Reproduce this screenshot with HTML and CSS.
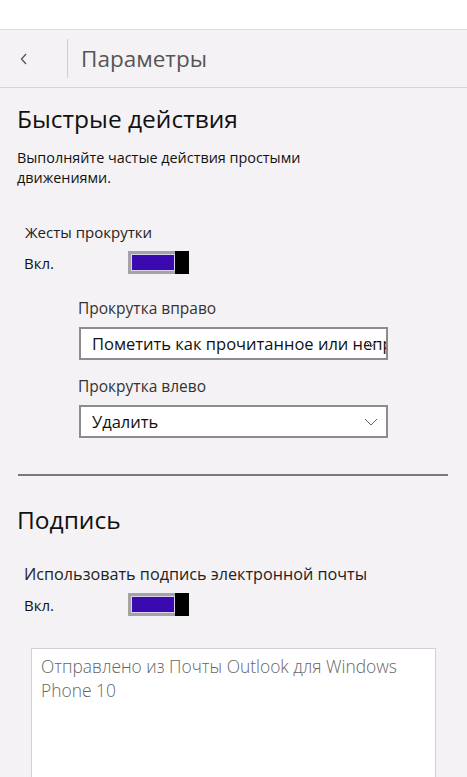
FILE: index.html
```html
<!DOCTYPE html>
<html lang="ru">
<head>
<meta charset="utf-8">
<title>Параметры</title>
<link rel="stylesheet" href="styles.css">
</head>
<body>
<div class="status"></div>
<header class="header">
  <div class="back">
    <svg width="10" height="14" viewBox="0 0 10 14"><path d="M7 2 L2.5 7 L7 12" fill="none" stroke="#555" stroke-width="1.3"/></svg>
  </div>
  <div class="title">Параметры</div>
</header>
<main class="content">
  <section class="section">
    <h2 class="heading">Быстрые действия</h2>
    <p class="desc">Выполняйте частые действия простыми движениями.</p>
    <div class="label">Жесты прокрутки</div>
    <div class="toggle-row">
      <span class="state">Вкл.</span>
      <span class="toggle"><span class="track"></span><span class="thumb"></span></span>
    </div>
    <div class="sub">
      <div class="field-label">Прокрутка вправо</div>
      <div class="select"><span class="value">Пометить как прочитанное или непрочитанное</span><svg class="chev" width="14" height="8" viewBox="0 0 14 8"><path d="M1 1 L7 7 L13 1" fill="none" stroke="#666" stroke-width="1"/></svg></div>
      <div class="field-label second">Прокрутка влево</div>
      <div class="select"><span class="value">Удалить</span><svg class="chev" width="14" height="8" viewBox="0 0 14 8"><path d="M1 1 L7 7 L13 1" fill="none" stroke="#666" stroke-width="1"/></svg></div>
    </div>
  </section>
  <hr class="rule">
  <section class="section">
    <h2 class="heading sig">Подпись</h2>
    <div class="label wide">Использовать подпись электронной почты</div>
    <div class="toggle-row">
      <span class="state">Вкл.</span>
      <span class="toggle"><span class="track"></span><span class="thumb"></span></span>
    </div>
    <div class="textarea">Отправлено из Почты Outlook для Windows Phone 10</div>
  </section>
</main>
</body>
</html>
```
FILE: styles.css
```css
* { box-sizing: border-box; }
html, body { margin: 0; padding: 0; }
body {
  background: #f5f2f5;
  font-family: "Open Sans", "Noto Sans", sans-serif;
  color: #111;
  height: 777px;
  overflow: hidden;
}
.status {
  height: 30px;
  background: #ffffff;
  border-bottom: 1px solid #dcdadc;
}
.header {
  height: 58px;
  display: flex;
  align-items: center;
  border-bottom: 1px solid #d8d5d8;
}
.back {
  width: 68px;
  height: 39px;
  display: flex;
  align-items: center;
  padding-left: 19px;
  border-right: 1px solid #d0ccd0;
}
.title {
  padding-left: 13px;
  font-size: 22.5px;
  color: #555;
  font-weight: 400;
}
.content { padding: 0 17px; }
.heading {
  margin: 16px 0 0;
  font-size: 24.5px;
  font-weight: 400;
  line-height: 30px;
  color: #111;
}
.desc {
  margin: 14px 0 0;
  font-size: 14.4px;
  line-height: 20px;
  width: 310px;
  color: #111;
}
.label {
  margin: 34px 0 0 8px;
  font-size: 15px;
  line-height: 20px;
  color: #222;
}
.label.wide { font-size: 16.2px; margin-top: 29px; margin-left: 7px; }
.toggle-row {
  display: flex;
  align-items: center;
  margin: 9px 0 0 7px;
  height: 23px;
}
.state {
  width: 104px;
  font-size: 15px;
  color: #111;
}
.toggle {
  display: flex;
  width: 61px;
  height: 23px;
  border: 3px solid #a5a3a6;
  background: #a5a3a6;
}
.track {
  flex: 1;
  background: #3a0ab0;
  border: 1px solid #d8d4ec;
}
.thumb {
  width: 14px;
  margin: -3px -3px -3px 0;
  background: #000;
}
.sub { margin: 24px 0 0 61px; }
.field-label {
  font-size: 15.5px;
  line-height: 20px;
  color: #333;
}
.field-label.second { margin-top: 16px; }
.select {
  position: relative;
  margin: 9px 0 0 1px;
  width: 309px;
  height: 33px;
  border: 2px solid #8d8b8d;
  background: #fff;
  display: flex;
  align-items: center;
  padding-left: 11px;
  overflow: hidden;
}
.value {
  white-space: nowrap;
  font-size: 16.5px;
  color: #111;
}
.chev {
  position: absolute;
  right: 8px;
  top: 11px;
}
.rule {
  margin: 36px 2px 0 1px;
  border: 0;
  height: 2px;
  background: #7a787a;
}
.heading.sig { margin-top: 29px; }
.textarea {
  margin: 32px 14px 0 14px;
  height: 140px;
  background: #fff;
  border: 1px solid #d3d0d3;
  padding: 5px 9px;
  font-size: 17.4px;
  line-height: 24px;
  color: #666;
  font-weight: 300;
  width: 405px;
}
```
